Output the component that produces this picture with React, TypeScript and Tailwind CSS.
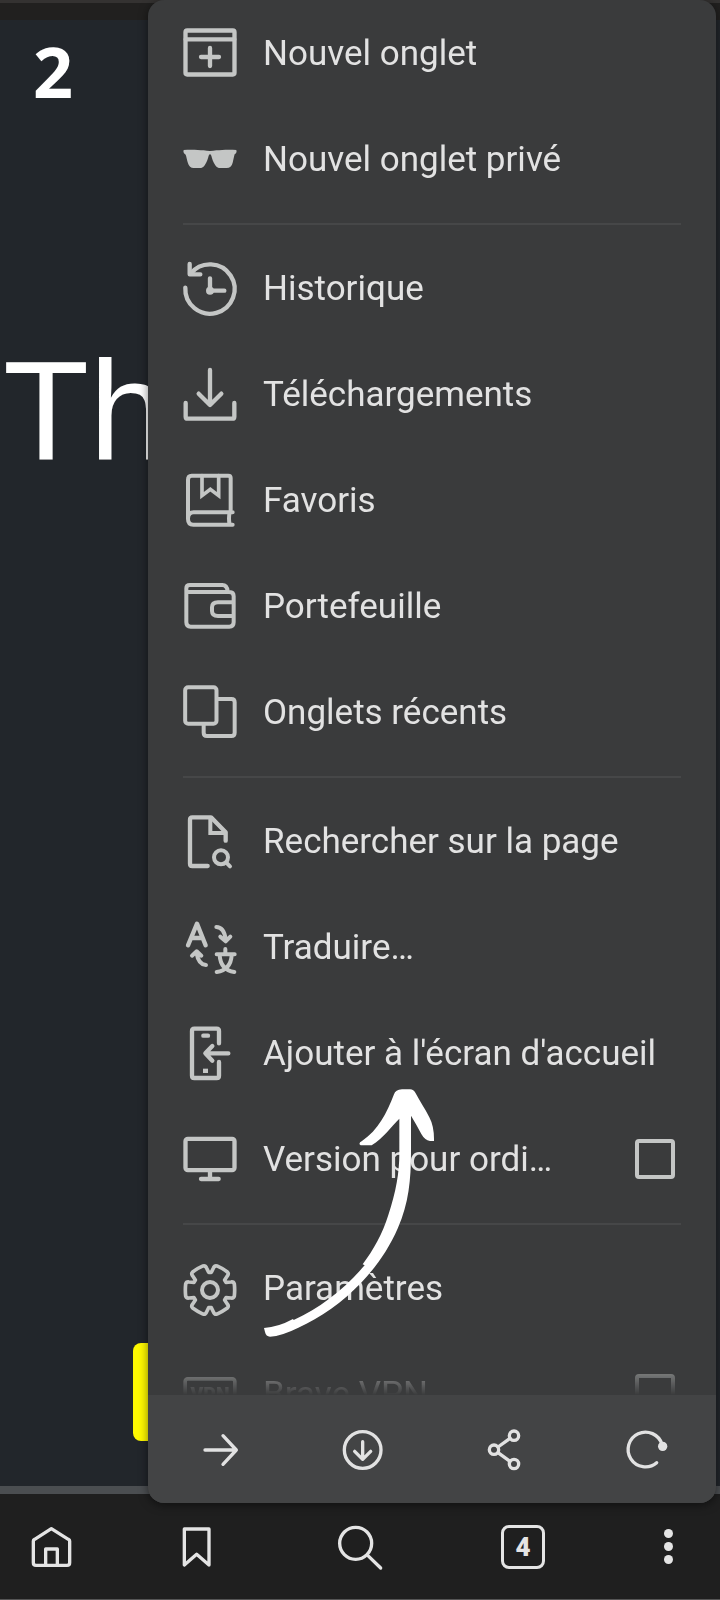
import type { ReactNode } from "react";

function MenuGlyph({ children }: { children: ReactNode }) {
  return (
    <svg
      viewBox="0 0 162 162"
      className="size-[54px] shrink-0 overflow-visible text-[#c4c6c5]"
      fill="none"
      stroke="currentColor"
      strokeWidth="13"
      strokeLinecap="round"
      strokeLinejoin="round"
      aria-hidden="true"
    >
      {children}
    </svg>
  );
}

function ToolGlyph({ children }: { children: ReactNode }) {
  return (
    <svg
      viewBox="0 0 120 120"
      className="size-10 overflow-visible"
      fill="none"
      stroke="currentColor"
      strokeWidth="10"
      strokeLinecap="round"
      strokeLinejoin="round"
      aria-hidden="true"
    >
      {children}
    </svg>
  );
}

function NavGlyph({ children }: { children: ReactNode }) {
  return (
    <svg
      viewBox="0 0 144 144"
      className="size-12"
      fill="none"
      stroke="currentColor"
      strokeWidth="10"
      strokeLinecap="round"
      strokeLinejoin="round"
      aria-hidden="true"
    >
      {children}
    </svg>
  );
}

// One gear tooth pointing right, repeated every 60 degrees around the hub.
const TOOTH: [number, number][] = [
  [48, -23], [63, -24], [71, -25], [73, -18], [75, 0], [73, 18], [71, 25], [63, 24], [48, 23],
];
const GEAR =
  [0, 60, 120, 180, 240, 300]
    .map((deg, i) => {
      const a = (deg * Math.PI) / 180;
      const p = TOOTH.map(
        ([x, y]) =>
          `${(81 + x * Math.cos(a) - y * Math.sin(a)).toFixed(1)} ${(87 + x * Math.sin(a) + y * Math.cos(a)).toFixed(1)}`
      );
      return `${i === 0 ? "M" : "L"}${p[0]} L${p[1]} Q${p[2]} ${p[3]} Q${p[4]} ${p[5]} Q${p[6]} ${p[7]} L${p[8]}`;
    })
    .join(" ") + " Z";

type Item = { label: string; icon: ReactNode; check?: boolean };

const groups: Item[][] = [
  [
    {
      label: "Nouvel onglet",
      icon: (
        <>
          <rect x="7.5" y="13.5" width="147" height="132" rx="5" />
          <path d="M8 40H154M54 93H108M81 66V120" />
        </>
      ),
    },
    {
      label: "Nouvel onglet privé",
      icon: (
        <path
          fill="currentColor"
          stroke="none"
          d="M2 54C20 52 45 53 62 55Q81 59 100 55C117 53 142 52 160 54Q162 60 159 64L155 67C153 73 151 84 149 92Q145 108 131 108H113Q101 108 96 98C91 90 87 80 85 71Q83 67 81 67Q79 67 77 71C75 80 71 90 66 98Q61 108 49 108H32Q19 108 15 94C12 84 10 73 8 68L3 64Q0 60 2 54Z"
        />
      ),
    },
  ],
  [
    {
      label: "Historique",
      icon: (
        <>
          <path d="M7 80A74 74 0 1 0 23 38" />
          <path d="M20 9V40H52M81 52V89H124" />
          <circle cx="81" cy="89" r="12" fill="currentColor" stroke="none" />
        </>
      ),
    },
    {
      label: "Téléchargements",
      icon: <path d="M81 9V114M47 80L81 114L115 80M8 108V149Q8 155 14 155H148Q154 155 154 149V108" />,
    },
    {
      label: "Favoris",
      icon: (
        <>
          <path
            strokeWidth="12"
            d="M149 155H31Q15 155 15 138V20Q15 8 26 8H136Q143 8 143 15V118M15 136Q16 118 32 118H149M140 118Q136 137 140 155"
          />
          <path strokeWidth="11" strokeLinejoin="miter" d="M57 8V68L82 49L107 68V8" />
        </>
      ),
    },
    {
      label: "Portefeuille",
      icon: (
        <path
          strokeWidth="12"
          d="M10 38V130Q10 143 23 143H139Q152 143 152 130V52Q152 39 139 39H12M10 40V28Q10 18 21 18H118Q132 18 134 37M150 70H105Q87 70 87 85V96Q87 111 105 111H150"
        />
      ),
    },
    {
      label: "Onglets récents",
      icon: (
        <>
          <rect x="6.5" y="6.5" width="94" height="110" rx="9" strokeWidth="12" />
          <path strokeWidth="12" d="M104 42H145Q155 42 155 52V143Q155 153 145 153H72Q62 153 62 143V120" />
        </>
      ),
    },
  ],
  [
    {
      label: "Rechercher sur la page",
      icon: (
        <>
          <path d="M74 156H28Q21 156 21 149V17Q21 10 28 10H84L128 55V80" />
          <path strokeWidth="12" strokeLinejoin="miter" d="M82 12V57H126" />
          <circle cx="114" cy="130" r="21" strokeWidth="12" />
          <path strokeWidth="12" d="M130 146L141 157" />
        </>
      ),
    },
    {
      label: "Traduire…",
      icon: (
        <>
          <path d="M15 76L42 11L68 76M25 54H59" />
          <path strokeWidth="12" d="M100 21Q123 21 128 58M112 50L128 64L142 50" />
          <path strokeWidth="12" d="M69 135Q46 133 41 100M27 107L41 94L55 107" />
          <path strokeWidth="12" d="M127 87V101M101 103H155M110 106C112 136 128 152 154 156M146 106C144 136 126 152 101 156" />
        </>
      ),
    },
    {
      label: "Ajouter à l'écran d'accueil",
      icon: (
        <>
          <path d="M108 52V15Q108 8 101 8H34Q27 8 27 15V149Q27 156 34 156H101Q108 156 108 149V108" />
          <path d="M136 82H68M88 60L67 82L88 104M61 29H75" />
          <rect x="60" y="128" width="15" height="13" fill="currentColor" stroke="none" />
        </>
      ),
    },
    {
      label: "Version pour ordi…",
      check: true,
      icon: (
        <>
          <rect x="7.5" y="20.5" width="147" height="94" rx="7" />
          <path d="M81 118V138M54 141H107" />
        </>
      ),
    },
  ],
  [
    {
      label: "Paramètres",
      icon: (
        <>
          <path strokeWidth="11" d={GEAR} />
          <circle cx="81" cy="87" r="24" strokeWidth="12" />
        </>
      ),
    },
    {
      label: "Brave VPN",
      check: true,
      icon: (
        <>
          <rect x="6.5" y="35.5" width="149" height="92" rx="8" strokeWidth="11" />
          <text
            x="81"
            y="104"
            textAnchor="middle"
            fill="currentColor"
            stroke="none"
            className="font-['Roboto',sans-serif] text-[58px] font-black"
          >
            VPN
          </text>
        </>
      ),
    },
  ],
];

function MenuRow({ item }: { item: Item }) {
  const inner = (
    <>
      <MenuGlyph>{item.icon}</MenuGlyph>
      <span className="flex-1 truncate pt-[2px]">{item.label}</span>
    </>
  );
  const row = "flex h-[106px] w-full items-center gap-[26px] pl-[35px] text-left";
  if (item.check) {
    return (
      <label className={`${row} pr-[41px]`}>
        {inner}
        <input type="checkbox" className="size-10 shrink-0 appearance-none rounded border-4 border-[#c4c6c5]" />
      </label>
    );
  }
  return (
    <button type="button" className={`${row} pr-4`}>
      {inner}
    </button>
  );
}

function PointerArrow() {
  return (
    <svg
      viewBox="279 24 519 750"
      className="pointer-events-none absolute top-[1088px] left-[115px] w-[173px] text-white"
      fill="currentColor"
      aria-hidden="true"
    >
      <path d="M672 43Q676 30 696 28H720Q731 28 737 40C748 62 765 86 778 112Q793 140 792 183H780Q764 180 754 162C744 143 734 125 723 107V215C723 300 716 370 684 443C655 510 618 560 575 607C520 665 450 715 385 743Q335 768 300 770Q288 770 285 756L282 744Q325 741 369 717L371 720C450 685 525 625 584 556L578 553C610 510 638 460 655 405C678 335 688 280 688 220V116C665 138 640 175 605 196H572Q563 190 576 183C625 150 650 100 672 43Z" />
    </svg>
  );
}

function BrowserMenu() {
  return (
    <section
      aria-label="Menu"
      className="absolute top-0 right-1 left-[148px] flex flex-col overflow-hidden rounded-2xl bg-[#3a3b3c] font-['Roboto',sans-serif] text-[35px] leading-[42px] text-[#e2e2e2] shadow-[0_2px_10px_rgba(0,0,0,0.5)]"
    >
      <div className="h-[1395px] overflow-hidden mask-[linear-gradient(to_top,transparent,black_48px)]">
        {groups.map((items, i) => (
          <div key={i}>
            {i > 0 && (
              <div className="flex h-[23px] items-center px-[35px]">
                <hr className="w-full border-t-2 border-[#464748]" />
              </div>
            )}
            {items.map((item) => (
              <MenuRow key={item.label} item={item} />
            ))}
          </div>
        ))}
      </div>
      <div className="grid h-[108px] grid-cols-4 place-items-center bg-[#434445]">
        <button type="button" aria-label="Avancer">
          <ToolGlyph>
            <path d="M18 63H112M72 20L112 63L72 106" />
          </ToolGlyph>
        </button>
        <button type="button" aria-label="Télécharger la page">
          <ToolGlyph>
            <circle cx="65" cy="63" r="55" />
            <path d="M65 38V90M41 67L65 91L89 67" />
          </ToolGlyph>
        </button>
        <button type="button" aria-label="Partager">
          <ToolGlyph>
            <circle cx="33" cy="62" r="14" />
            <circle cx="93" cy="20" r="14" />
            <circle cx="93" cy="105" r="14" />
            <path d="M45 54L81 28M45 71L81 97" />
          </ToolGlyph>
        </button>
        <button type="button" aria-label="Actualiser">
          <ToolGlyph>
            <path d="M95 101A52 52 0 1 1 111 46" />
            <circle cx="113" cy="52" r="14" fill="currentColor" stroke="none" />
          </ToolGlyph>
        </button>
      </div>
      <PointerArrow />
    </section>
  );
}

function BottomBar() {
  const side = "flex w-24 justify-center";
  return (
    <nav className="flex h-[106px] items-center justify-between border-b border-[#555555] bg-[#1f1f1f] px-1 text-[#e4e4e4]">
      <button type="button" aria-label="Accueil" className={side}>
        <NavGlyph>
          <path d="M16 54Q16 51 20 49L70 17L121 49Q125 51 125 54V119Q125 127 117 127H24Q16 127 16 119ZM53 125V78H88V125" />
        </NavGlyph>
      </button>
      <button type="button" aria-label="Favoris" className={side}>
        <NavGlyph>
          <path d="M34 18H108V126L71 94L34 126Z" />
        </NavGlyph>
      </button>
      <button type="button" aria-label="Rechercher" className="flex w-[132px] justify-center">
        <NavGlyph>
          <circle cx="59" cy="61" r="48" />
          <path d="M95 97L134 135" />
        </NavGlyph>
      </button>
      <button type="button" aria-label="4 onglets" className={side}>
        <span className="flex size-11 items-center justify-center rounded-lg border-3 border-[#e4e4e4] font-['Roboto',sans-serif] text-[26px] leading-none font-black">
          4
        </span>
      </button>
      <button type="button" aria-label="Plus" className={`${side} flex-col items-center gap-1`}>
        <span className="size-[9px] rounded-full bg-[#e4e4e4]" />
        <span className="size-[9px] rounded-full bg-[#e4e4e4]" />
        <span className="size-[9px] rounded-full bg-[#e4e4e4]" />
      </button>
    </nav>
  );
}

export default function App() {
  return (
    <div className="relative flex min-h-screen flex-col overflow-hidden bg-[#22262b]">
      <div className="h-5 border-t-3 border-[#343231] bg-[#21201f]" />
      <main className="flex flex-1 flex-col">
        <p className="mt-[3px] pl-[33px] font-['Open_Sans',sans-serif] text-[70px] leading-[96px] font-bold text-white">
          2
        </p>
        <h1 className="mt-[213px] pl-[3px] font-['Liberation_Sans',sans-serif] text-[141px] leading-[156px] text-white">
          Th
        </h1>
        <button
          type="button"
          aria-label="Continuer"
          className="mx-[133px] mt-auto mb-[45px] h-[98px] rounded-lg bg-[#fff900]"
        />
      </main>
      <div className="h-2 bg-[#4b4e51]" />
      <BottomBar />
      <BrowserMenu />
    </div>
  );
}
